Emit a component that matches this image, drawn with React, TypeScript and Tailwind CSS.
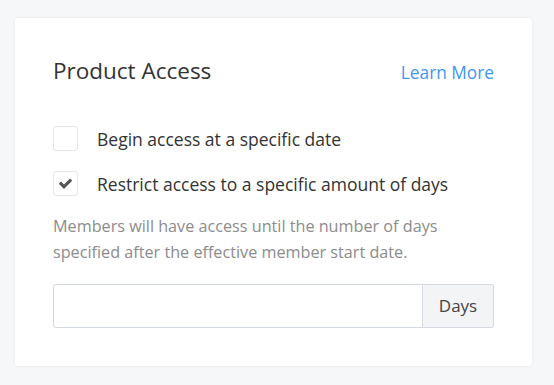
export default function App() {
  const options = [
    { label: 'Begin access at a specific date', checked: false },
    { label: 'Restrict access to a specific amount of days', checked: true },
  ];

  return (
    <div className="min-h-[385px] w-[554px] bg-[#f6f7f9] pt-[18px] pl-[15px] font-['Open_Sans',sans-serif]">
      <div className="w-[517px] rounded-[3px] bg-white px-[38px] pt-[38px] pb-[38px] shadow-[0_0_3px_rgba(0,0,0,0.08)]">
        <div className="flex items-baseline justify-between">
          <h2 className="text-[22.5px] leading-[30px] text-[#333]">Product Access</h2>
          <a className="text-[17.3px] leading-[24px] text-[#3f98f0]">Learn More</a>
        </div>

        <div className="mt-[40px] flex flex-col gap-[20px]">
          {options.map((o) => (
            <label key={o.label} className="flex items-center gap-[19px]">
              <span className="flex h-[25px] w-[25px] items-center justify-center rounded-[3px] border border-[#e3e6ea] bg-white">
                {o.checked && (
                  <svg width="15" height="15" viewBox="0 0 1792 1792" className="text-[#555]">
                    <path
                      fill="currentColor"
                      d="M1671 566q0 40-28 68l-724 724-136 136q-28 28-68 28t-68-28l-136-136-362-362q-28-28-28-68t28-68l136-136q28-28 68-28t68 28l294 295 656-657q28-28 68-28t68 28l136 136q28 28 28 68z"
                    />
                  </svg>
                )}
              </span>
              <span className="text-[17.5px] leading-[24px] text-[#333]">{o.label}</span>
            </label>
          ))}
        </div>

        <p className="mt-[17px] text-[16.2px] leading-[26px] text-[#8c8c8c]">
          Members will have access until the number of days specified after the effective member start date.
        </p>

        <div className="mt-[19px] flex h-[44px] w-[441px]">
          <input className="min-w-0 flex-1 rounded-l-[3px] border border-[#d3d9e0] bg-white outline-none" />
          <span className="flex w-[71px] items-center justify-center rounded-r-[3px] border border-l-0 border-[#d3d9e0] bg-[#f3f4f6] text-[17px] text-[#444]">
            Days
          </span>
        </div>
      </div>
    </div>
  );
}
